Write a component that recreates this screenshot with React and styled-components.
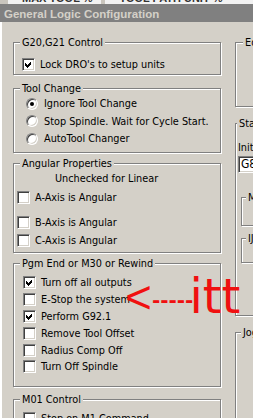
import styled, { createGlobalStyle } from "styled-components";

const GlobalStyle = createGlobalStyle`
  html, body {
    margin: 0;
    padding: 0;
    background: #d4d0c8;
    overflow: hidden;
  }
`;

const uiFont = `"DejaVu Sans Condensed", "Liberation Sans", sans-serif`;

const pgmEndOptions = [
  { label: "Turn off all outputs", checked: true },
  { label: "E-Stop the system", checked: false },
  { label: "Perform G92.1", checked: true },
  { label: "Remove Tool Offset", checked: false },
  { label: "Radius Comp Off", checked: false },
  { label: "Turn Off Spindle", checked: false },
];

const Check = ({ checked }) => (
  <CheckBox>
    {checked && (
      <svg width="9" height="9" viewBox="0 0 9 9" shapeRendering="crispEdges">
        <path d="M1 3 L3 5 L7 1 L7 4 L3 8 L1 6 Z" fill="#000" />
      </svg>
    )}
  </CheckBox>
);

const App = () => {
  return (
    <Screen>
      <GlobalStyle />
      <BehindStrip>
        <BehindField $w={85}>
          <span>MAX TOOL %</span>
        </BehindField>
        <BehindField $w={143}>
          <span>TOOL PATH UNIT %</span>
        </BehindField>
      </BehindStrip>

      <TitleBar>General Logic Configuration</TitleBar>

      <Body>
        <LeftColumn>
          <Group $mt={14} $h={39}>
            <Legend>G20,G21 Control</Legend>
            <Options $pad="7px 0 0 8px">
              <Option>
                <Check checked />
                Lock DRO's to setup units
              </Option>
            </Options>
          </Group>

          <Group $mt={7} $h={71}>
            <Legend>Tool Change</Legend>
            <Options $pad="0 0 0 12px">
              <Option $h={17.5} $gap={6}>
                <Radio $on />
                Ignore Tool Change
              </Option>
              <Option $h={17.5} $gap={6}>
                <Radio />
                Stop Spindle. Wait for Cycle Start.
              </Option>
              <Option $h={17.5} $gap={6}>
                <Radio />
                AutoTool Changer
              </Option>
            </Options>
          </Group>

          <Group $mt={4} $h={96}>
            <Legend>Angular Properties</Legend>
            <Options $pad="1px 0 0 3px">
              <Note>Unchecked for Linear</Note>
              <Option $mt={2}>
                <Check />
                A-Axis is Angular
              </Option>
              <Option $mt={9}>
                <Check />
                B-Axis is Angular
              </Option>
              <Option $mt={2}>
                <Check />
                C-Axis is Angular
              </Option>
            </Options>
          </Group>

          <Group $mt={4} $h={130}>
            <Legend>Pgm End or M30 or Rewind</Legend>
            <Options $pad="4.5px 0 0 9px">
              {pgmEndOptions.map((opt) => (
                <Option key={opt.label} $h={16.8}>
                  <Check checked={opt.checked} />
                  {opt.label}
                </Option>
              ))}
            </Options>
          </Group>

          <Group $mt={6} $h={60}>
            <Legend>M01 Control</Legend>
            <Options $pad="4px 0 0 9px">
              <Option>
                <Check />
                Stop on M1 Command
              </Option>
            </Options>
          </Group>
        </LeftColumn>

        <RightColumn>
          <Group $mt={14} $h={71}>
            <Legend $indent={7}>Editor</Legend>
          </Group>

          <Group $mt={10} $h={199}>
            <Legend $indent={1}>Startup Modals</Legend>
            <InitLabel>Init String</InitLabel>
            <InitInput>G80 G40 G49 G17 G21</InitInput>
            <Group $mt={18} $h={35} $ml={5}>
              <Legend $indent={4}>Motion Mode</Legend>
            </Group>
            <Group $mt={6} $h={31} $ml={5}>
              <Legend $indent={4}>IJ Mode</Legend>
            </Group>
          </Group>

          <Group $mt={10} $h={120}>
            <Legend $indent={5}>Jog Increments in Cycle Mode</Legend>
          </Group>
        </RightColumn>
      </Body>

      <Annotation>
        <Arrow>&lt;</Arrow>
        <Dashes>-----</Dashes>
        <Word>itt</Word>
      </Annotation>
    </Screen>
  );
};

const Screen = styled.div`
  position: relative;
  width: 253px;
  height: 418px;
  overflow: hidden;
  background: #d4d0c8;
  font-family: ${uiFont};
  font-size: 10.8px;
  color: #000;
`;

const BehindStrip = styled.div`
  display: flex;
  gap: 4px;
  height: 4px;
  padding-left: 8px;
  background: #c9c5bd;
  overflow: hidden;
`;

const BehindField = styled.div`
  width: ${(p) => p.$w}px;
  height: 4px;
  overflow: hidden;
  background: #f2f2f2;
  color: #333;
  font: bold 11px "Liberation Sans", sans-serif;
  line-height: 10px;
  padding-left: 14px;
  white-space: nowrap;

  span {
    display: block;
    margin-top: -7px;
  }
`;

const TitleBar = styled.div`
  height: 18px;
  padding: 1px 0 0 4px;
  box-sizing: border-box;
  background: #808080;
  color: #d4d0c8;
  font: bold 11.5px "Liberation Sans", Arial, sans-serif;
  line-height: 18px;
  white-space: nowrap;
`;

const Body = styled.div`
  display: flex;
  gap: 14px;
  padding-left: 13px;
  height: 396px;
  box-shadow: inset 2px 0 0 #fff;
`;

const LeftColumn = styled.div`
  display: flex;
  flex-direction: column;
  width: 208px;
  flex-shrink: 0;
`;

const RightColumn = styled.div`
  display: flex;
  flex-direction: column;
  width: 110px;
  flex-shrink: 0;
`;

const Group = styled.fieldset`
  margin: ${(p) => p.$mt || 0}px 0 0 ${(p) => p.$ml || 0}px;
  padding: 0;
  min-width: 0;
  height: ${(p) => p.$h}px;
  box-sizing: border-box;
  flex-shrink: 0;
  border: 1px solid #808080;
  box-shadow: inset 1px 1px 0 #fff, 1px 1px 0 #fff;
`;

const Legend = styled.legend`
  margin-left: ${(p) => (p.$indent ?? 6)}px;
  padding: 0 2px;
  height: 13px;
  line-height: 13px;
  background: #d4d0c8;
  white-space: nowrap;
`;

const Options = styled.div`
  display: flex;
  flex-direction: column;
  padding: ${(p) => p.$pad};
`;

const Option = styled.label`
  display: flex;
  align-items: center;
  gap: ${(p) => p.$gap ?? 5}px;
  height: ${(p) => p.$h ?? 16}px;
  margin-top: ${(p) => p.$mt ?? 0}px;
  white-space: nowrap;
`;

const Note = styled.div`
  height: 16px;
  line-height: 16px;
  padding-left: 38px;
  white-space: nowrap;
`;

const CheckBox = styled.span`
  display: flex;
  align-items: center;
  justify-content: center;
  width: 13px;
  height: 13px;
  box-sizing: border-box;
  flex-shrink: 0;
  background: #fff;
  border: 1px solid;
  border-color: #808080 #fff #fff #808080;
  box-shadow: inset 1px 1px 0 #404040, inset -1px -1px 0 #d4d0c8;
`;

const Radio = styled.span`
  position: relative;
  width: 12px;
  height: 12px;
  box-sizing: border-box;
  flex-shrink: 0;
  border-radius: 50%;
  background: #fff;
  border: 1px solid;
  border-color: #808080 #fff #fff #808080;
  box-shadow: inset 1px 1px 0 #404040, inset -1px -1px 0 #d4d0c8;

  &::after {
    content: "";
    display: ${(p) => (p.$on ? "block" : "none")};
    position: absolute;
    left: 3px;
    top: 3px;
    width: 4px;
    height: 4px;
    border-radius: 50%;
    background: #000;
  }
`;

const InitLabel = styled.div`
  margin: 11px 0 0 2px;
  height: 13px;
  line-height: 13px;
  white-space: nowrap;
`;

const InitInput = styled.div`
  margin: 2px 0 0 2px;
  height: 17px;
  box-sizing: border-box;
  padding-left: 2px;
  line-height: 14px;
  background: #fff;
  border: 1px solid;
  border-color: #808080 #fff #fff #808080;
  box-shadow: inset 1px 1px 0 #404040, inset -1px -1px 0 #d4d0c8;
  white-space: nowrap;
  overflow: hidden;
  font-size: 12px;
`;

const Annotation = styled.div`
  position: absolute;
  left: 125px;
  top: 272px;
  color: #f01010;
  line-height: 48px;
  white-space: nowrap;
`;

const Arrow = styled.span`
  font: 46px "Liberation Sans", Arial, sans-serif;
  line-height: 1;
`;

const Dashes = styled.span`
  font: bold 20px "DejaVu Sans", sans-serif;
  line-height: 1;
  vertical-align: 6px;
`;

const Word = styled.span`
  display: inline-block;
  margin-left: -4px;
  font: 48px "DejaVu Sans", sans-serif;
  line-height: 1;
`;

export default App;
